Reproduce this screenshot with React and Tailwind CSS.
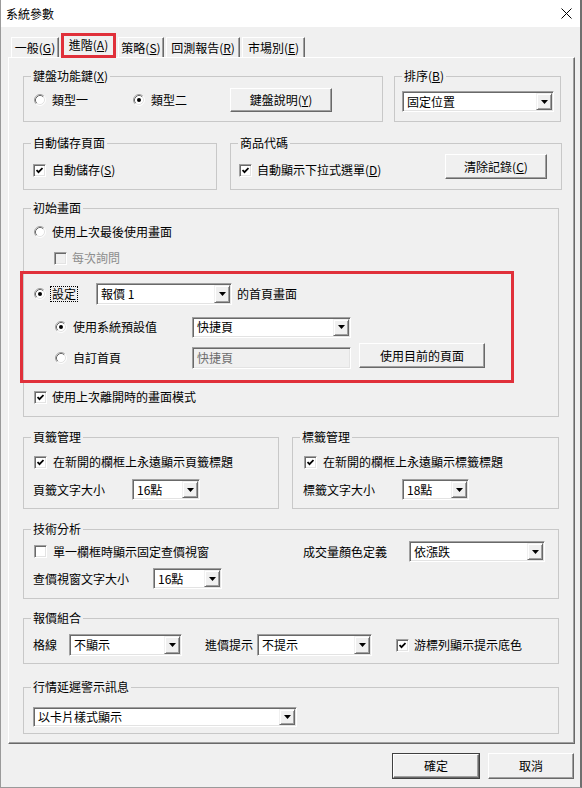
const U = ({ children }) => <span className="underline underline-offset-[1px]">{children}</span>;

function Radio({ checked }) {
  return (
    <svg width="12" height="12" viewBox="0 0 12 12" className="shrink-0">
      <circle cx="6" cy="6" r="5" fill="#fff" />
      <path d="M9.89 2.11A5.5 5.5 0 0 0 2.11 9.89" fill="none" stroke="#a0a0a0" />
      <path d="M9.18 2.82A4.5 4.5 0 0 0 2.82 9.18" fill="none" stroke="#696969" />
      <path d="M9.89 2.11A5.5 5.5 0 0 1 2.11 9.89" fill="none" stroke="#ffffff" />
      <path d="M9.18 2.82A4.5 4.5 0 0 1 2.82 9.18" fill="none" stroke="#e3e3e3" />
      {checked && <circle cx="6" cy="6" r="2" fill="#000" />}
    </svg>
  );
}

function Check({ checked, disabled }) {
  return (
    <span
      className={`w-[13px] h-[13px] shrink-0 flex items-center justify-center border border-t-[#a0a0a0] border-l-[#a0a0a0] border-r-white border-b-white shadow-[inset_1px_1px_0_#696969,inset_-1px_-1px_0_#e3e3e3] ${
        disabled ? 'bg-[#f0f0f0]' : 'bg-white'
      }`}
    >
      {checked && (
        <svg width="7" height="7" viewBox="0 0 7 7">
          <path d="M0.5 3L2.5 5.2L6.5 1" fill="none" stroke="#000" strokeWidth="1.8" />
        </svg>
      )}
    </span>
  );
}

function DropBtn() {
  return (
    <span className="w-[16px] h-full shrink-0 flex items-center justify-center bg-[#f0f0f0] border border-t-[#f0f0f0] border-l-[#f0f0f0] border-r-[#696969] border-b-[#696969] shadow-[inset_1px_1px_0_#ffffff,inset_-1px_-1px_0_#a0a0a0]">
      <svg width="7" height="4" viewBox="0 0 7 4">
        <path d="M0 0H7L3.5 4Z" fill="#000" />
      </svg>
    </span>
  );
}

function Combo({ value, className }) {
  return (
    <div
      className={`flex shrink-0 p-[1px] bg-white border border-t-[#a0a0a0] border-l-[#a0a0a0] border-r-white border-b-white shadow-[inset_1px_1px_0_#696969,inset_-1px_-1px_0_#e3e3e3] ${className}`}
    >
      <span className="flex-1 flex items-center pl-[3px] whitespace-nowrap overflow-hidden">{value}</span>
      <DropBtn />
    </div>
  );
}

function Btn({ children, className }) {
  return (
    <div
      className={`flex shrink-0 items-center justify-center bg-[#f0f0f0] border border-t-white border-l-white border-r-[#696969] border-b-[#696969] shadow-[inset_-1px_-1px_0_#a0a0a0] ${className}`}
    >
      {children}
    </div>
  );
}

function Group({ title, className, children }) {
  return (
    <fieldset className={`shrink-0 border border-[#c8c8c8] ${className}`}>
      <legend className="ml-[7px] px-[2px] leading-[16px]">{title}</legend>
      {children}
    </fieldset>
  );
}

function Tab({ children, className }) {
  return (
    <div
      className={`h-[20px] flex items-center justify-center border-t border-l border-r border-t-white border-l-white border-r-[#696969] shadow-[inset_-1px_0_0_#a0a0a0] ${className}`}
    >
      {children}
    </div>
  );
}

export default function App() {
  return (
    <div className="w-[582px] h-[788px] overflow-hidden flex flex-col bg-[#f0f0f0] border-l border-b border-[#9a9a9a] border-r-2 border-r-[#6f6f6f] text-[12px] leading-[16px] text-black font-['Noto_Sans_CJK_TC','Microsoft_JhengHei',sans-serif]">
      {/* title bar */}
      <div className="h-[27px] shrink-0 bg-white flex items-center justify-between pl-[5px] pr-[8px]">
        <span>系統參數</span>
        <svg width="11" height="11" viewBox="0 0 11 11">
          <path d="M0.5 0.5L10.5 10.5M10.5 0.5L0.5 10.5" stroke="#000" strokeWidth="1" />
        </svg>
      </div>

      {/* tabs */}
      <div className="h-[30px] shrink-0 flex items-end">
        <Tab className="ml-[10px] w-[48px]">一般(<U>G</U>)</Tab>
        <div className="relative z-10 -mb-px ml-[2px] w-[55px] h-[25px] flex items-center justify-center pb-[1px] bg-[#f0f0f0] border-[3px] border-[#e0303a]">
          進階(<U>A</U>)
        </div>
        <Tab className="ml-[2px] w-[46px]">策略(<U>S</U>)</Tab>
        <Tab className="ml-[2px] w-[74px]">回測報告(<U>R</U>)</Tab>
        <Tab className="ml-[2px] w-[63px]">市場別(<U>E</U>)</Tab>
      </div>

      {/* tab panel */}
      <div className="ml-[7px] w-[567px] h-[687px] shrink-0 flex flex-col pl-[14px] border border-t-white border-l-white border-r-[#696969] border-b-[#696969] shadow-[inset_-1px_-1px_0_#a0a0a0]">
        {/* row 1 */}
        <div className="flex mt-[10px]">
          <Group title={<>鍵盤功能鍵(<U>X</U>)</>} className="w-[360px] h-[54px]">
            <div className="flex items-center h-[32px] pl-[10px]">
              <div className="w-[99px] flex items-center">
                <Radio />
                <span className="ml-[6px]">類型一</span>
              </div>
              <div className="w-[97px] flex items-center">
                <Radio checked />
                <span className="ml-[6px]">類型二</span>
              </div>
              <Btn className="w-[102px] h-[24px]">鍵盤說明(<U>Y</U>)</Btn>
            </div>
          </Group>
          <Group title={<>排序(<U>B</U>)</>} className="ml-[11px] w-[167px] h-[54px]">
            <div className="pl-[7px] pt-[7px]">
              <Combo value="固定位置" className="w-[152px] h-[21px]" />
            </div>
          </Group>
        </div>

        {/* row 2 */}
        <div className="flex mt-[13px]">
          <Group title="自動儲存頁面" className="w-[194px] h-[55px]">
            <div className="flex items-center h-[38px] pl-[9px]">
              <Check checked />
              <span className="ml-[6px]">自動儲存(<U>S</U>)</span>
            </div>
          </Group>
          <Group title="商品代碼" className="ml-[13px] w-[332px] h-[55px]">
            <div className="flex items-center h-[38px] pl-[8px]">
              <Check checked />
              <span className="ml-[5px]">自動顯示下拉式選單(<U>D</U>)</span>
              <Btn className="self-start mt-[3px] ml-auto mr-[14px] w-[102px] h-[25px]">清除記錄(<U>C</U>)</Btn>
            </div>
          </Group>
        </div>

        {/* 初始畫面 */}
        <Group title="初始畫面" className="mt-[10px] w-[536px] h-[217px]">
          <div className="flex flex-col">
            <div className="mt-[8px] h-[16px] flex items-center pl-[10px]">
              <Radio />
              <span className="ml-[6px]">使用上次最後使用畫面</span>
            </div>
            <div className="mt-[10px] h-[16px] flex items-center pl-[30px]">
              <Check disabled />
              <span className="ml-[5px] text-[#8d8d8d]">每次詢問</span>
            </div>
            <div className="mt-[5px] -ml-[4px] w-[494px] h-[112px] border-[3px] border-[#e0303a] flex flex-col">
              <div className="mt-[9px] h-[22px] flex items-center pl-[11px]">
                <Radio checked />
                <div className="w-[50px] flex items-center">
                  <span className="ml-[4px] px-[1px] border border-dotted border-black leading-[14px]">設定</span>
                </div>
                <Combo value="報價 1" className="w-[136px] h-[22px]" />
                <span className="ml-[5px]">的首頁畫面</span>
              </div>
              <div className="mt-[11px] h-[22px] flex items-center pl-[32px]">
                <Radio checked />
                <div className="w-[125px]">
                  <span className="ml-[6px]">使用系統預設值</span>
                </div>
                <Combo value="快捷頁" className="w-[159px] h-[21px]" />
              </div>
              <div className="mt-[7px] h-[26px] flex items-center pl-[32px]">
                <Radio />
                <div className="w-[125px]">
                  <span className="ml-[6px]">自訂首頁</span>
                </div>
                <div className="w-[159px] h-[22px] flex items-center pl-[4px] text-[#6d6d6d] bg-[#f0f0f0] border border-t-[#a0a0a0] border-l-[#a0a0a0] border-r-white border-b-white shadow-[inset_1px_1px_0_#696969,inset_-1px_-1px_0_#e3e3e3]">
                  快捷頁
                </div>
                <Btn className="self-start -mt-[2px] ml-[8px] w-[126px] h-[25px]">使用目前的頁面</Btn>
              </div>
            </div>
            <div className="mt-[6px] h-[16px] flex items-center pl-[10px]">
              <Check checked />
              <span className="ml-[5px]">使用上次離開時的畫面模式</span>
            </div>
          </div>
        </Group>

        {/* 頁籤 / 標籤 */}
        <div className="flex mt-[12px]">
          <Group title="頁籤管理" className="w-[256px] h-[80px]">
            <div className="mt-[9px] h-[16px] flex items-center pl-[10px]">
              <Check checked />
              <span className="ml-[6px]">在新開的欄框上永遠顯示頁籤標題</span>
            </div>
            <div className="mt-[9px] h-[21px] flex items-center pl-[9px]">
              <span className="w-[99px]">頁籤文字大小</span>
              <Combo value="16點" className="w-[68px] h-[21px]" />
            </div>
          </Group>
          <Group title="標籤管理" className="ml-[13px] w-[267px] h-[80px]">
            <div className="mt-[9px] h-[16px] flex items-center pl-[11px]">
              <Check checked />
              <span className="ml-[6px]">在新開的欄框上永遠顯示標籤標題</span>
            </div>
            <div className="mt-[9px] h-[21px] flex items-center pl-[10px]">
              <span className="w-[99px]">標籤文字大小</span>
              <Combo value="18點" className="w-[67px] h-[21px]" />
            </div>
          </Group>
        </div>

        {/* 技術分析 */}
        <Group title="技術分析" className="mt-[12px] w-[536px] h-[78px]">
          <div className="mt-[4px] h-[21px] flex items-center pl-[10px]">
            <div className="w-[269px] flex items-center">
              <Check />
              <span className="ml-[6px]">單一欄框時顯示固定查價視窗</span>
            </div>
            <span className="w-[106px]">成交量顏色定義</span>
            <Combo value="依漲跌" className="w-[136px] h-[21px]" />
          </div>
          <div className="mt-[6px] h-[21px] flex items-center pl-[9px]">
            <span className="w-[120px]">查價視窗文字大小</span>
            <Combo value="16點" className="w-[69px] h-[21px]" />
          </div>
        </Group>

        {/* 報價組合 */}
        <Group title="報價組合" className="mt-[11px] w-[536px] h-[54px]">
          <div className="mt-[8px] h-[22px] flex items-center pl-[9px]">
            <span className="w-[36px]">格線</span>
            <Combo value="不顯示" className="w-[113px] h-[22px]" />
            <span className="ml-[23px] w-[52px]">進價提示</span>
            <Combo value="不提示" className="w-[115px] h-[22px]" />
            <span className="ml-[24px]">
              <Check checked />
            </span>
            <span className="ml-[5px]">游標列顯示提示底色</span>
          </div>
        </Group>

        {/* 行情延遲警示訊息 */}
        <Group title="行情延遲警示訊息" className="mt-[15px] w-[536px] h-[55px]">
          <div className="mt-[12px] pl-[9px]">
            <Combo value="以卡片樣式顯示" className="w-[264px] h-[20px]" />
          </div>
        </Group>
      </div>

      {/* dialog buttons */}
      <div className="flex justify-end items-start mt-[9px] pr-[6px]">
        <Btn className="mt-[1px] w-[86px] h-[24px] ring-1 ring-[#404040]">確定</Btn>
        <Btn className="ml-[9px] w-[86px] h-[26px]">取消</Btn>
      </div>
    </div>
  );
}
